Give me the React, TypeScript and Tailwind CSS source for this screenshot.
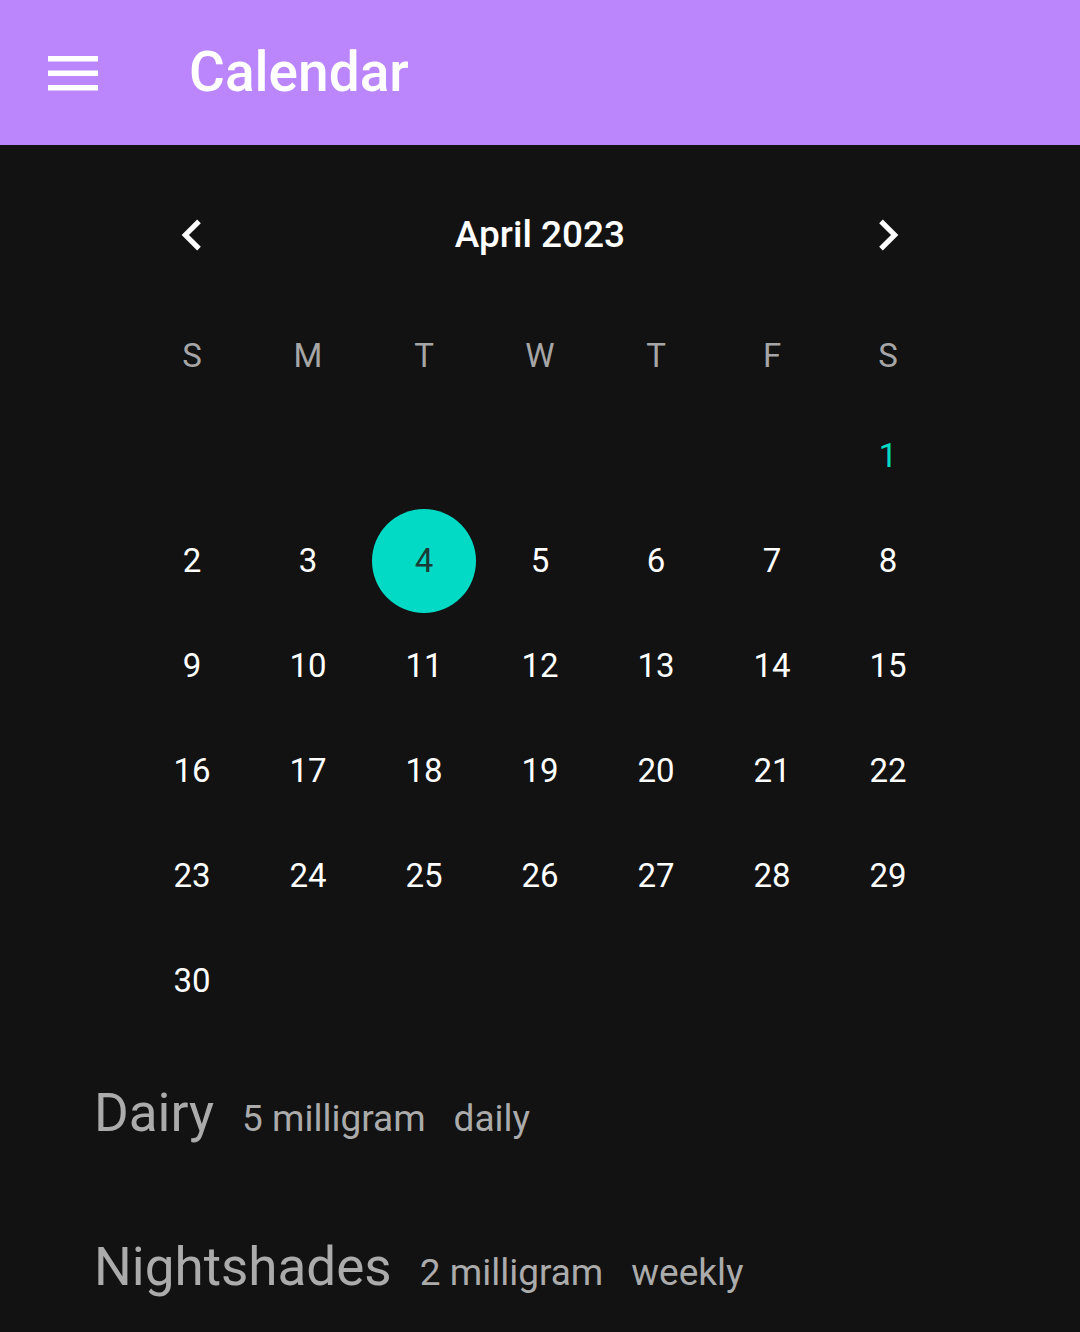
import React from "react"

const weekdays = ["S", "M", "T", "W", "T", "F", "S"]

const entries = [
  { name: "Dairy", amount: "5 milligram", freq: "daily" },
  { name: "Nightshades", amount: "2 milligram", freq: "weekly" },
]

function buildDays(): (number | null)[] {
  // April 2023 starts on a Saturday
  const cells: (number | null)[] = Array(6).fill(null)
  for (let d = 1; d <= 30; d++) cells.push(d)
  while (cells.length % 7 !== 0) cells.push(null)
  return cells
}

function Chevron({ dir }: { dir: "left" | "right" }) {
  return (
    <svg viewBox="0 0 24 24" className="w-[62px] h-[62px]" fill="#ffffff">
      {dir === "left" ? (
        <path d="M15.41 7.41L14 6l-6 6 6 6 1.41-1.41L10.83 12z" />
      ) : (
        <path d="M8.59 16.59L10 18l6-6-6-6-1.41 1.41L13.17 12z" />
      )}
    </svg>
  )
}

export default function App() {
  const days = buildDays()
  const today = 4

  return (
    <div className="min-h-[1332px] w-[1080px] bg-[#121212] font-['Roboto',sans-serif] overflow-hidden">
      {/* App bar */}
      <header className="h-[145px] bg-[#bb86fc] flex items-center pl-[48px]">
        <svg width="50" height="36" viewBox="0 0 50 36" className="shrink-0">
          <rect x="0" y="1" width="50" height="5.5" fill="#ffffff" />
          <rect x="0" y="15.5" width="50" height="5.5" fill="#ffffff" />
          <rect x="0" y="30" width="50" height="5.5" fill="#ffffff" />
        </svg>
        <h1 className="ml-[91px] text-[55px] font-medium text-white leading-none">Calendar</h1>
      </header>

      {/* Calendar */}
      <section className="pt-[50px] flex flex-col items-center">
        <div className="w-[812px]">
          <div className="h-[80px] flex items-center">
            <div className="w-[116px] flex justify-center">
              <Chevron dir="left" />
            </div>
            <div className="flex-1 text-center text-white text-[37px] font-medium">April 2023</div>
            <div className="w-[116px] flex justify-center">
              <Chevron dir="right" />
            </div>
          </div>

          <div className="mt-[34px] grid grid-cols-7 h-[94px] items-center">
            {weekdays.map((w, i) => (
              <div key={i} className="text-center text-[33px] text-[#a6a6a6]">
                {w}
              </div>
            ))}
          </div>

          <div className="grid grid-cols-7">
            {days.map((d, i) => (
              <div key={i} className="h-[105px] flex items-center justify-center">
                {d === today ? (
                  <div className="w-[104px] h-[104px] rounded-full bg-[#03dac5] flex items-center justify-center text-[33px] text-[#1c3b37]">
                    {d}
                  </div>
                ) : d === 1 ? (
                  <span className="text-[33px] text-[#03dac5]">{d}</span>
                ) : d ? (
                  <span className="text-[33px] text-white">{d}</span>
                ) : null}
              </div>
            ))}
          </div>
        </div>
      </section>

      {/* Entries */}
      <section className="mt-[4px] pl-[94px]">
        {entries.map((e) => (
          <div key={e.name} className="h-[154px] flex items-center">
            <div className="flex items-baseline gap-[28px] text-[#ababab]">
              <span className="text-[53px]">{e.name}</span>
              <span className="text-[37px]">{e.amount}</span>
              <span className="text-[37px]">{e.freq}</span>
            </div>
          </div>
        ))}
      </section>
    </div>
  )
}
